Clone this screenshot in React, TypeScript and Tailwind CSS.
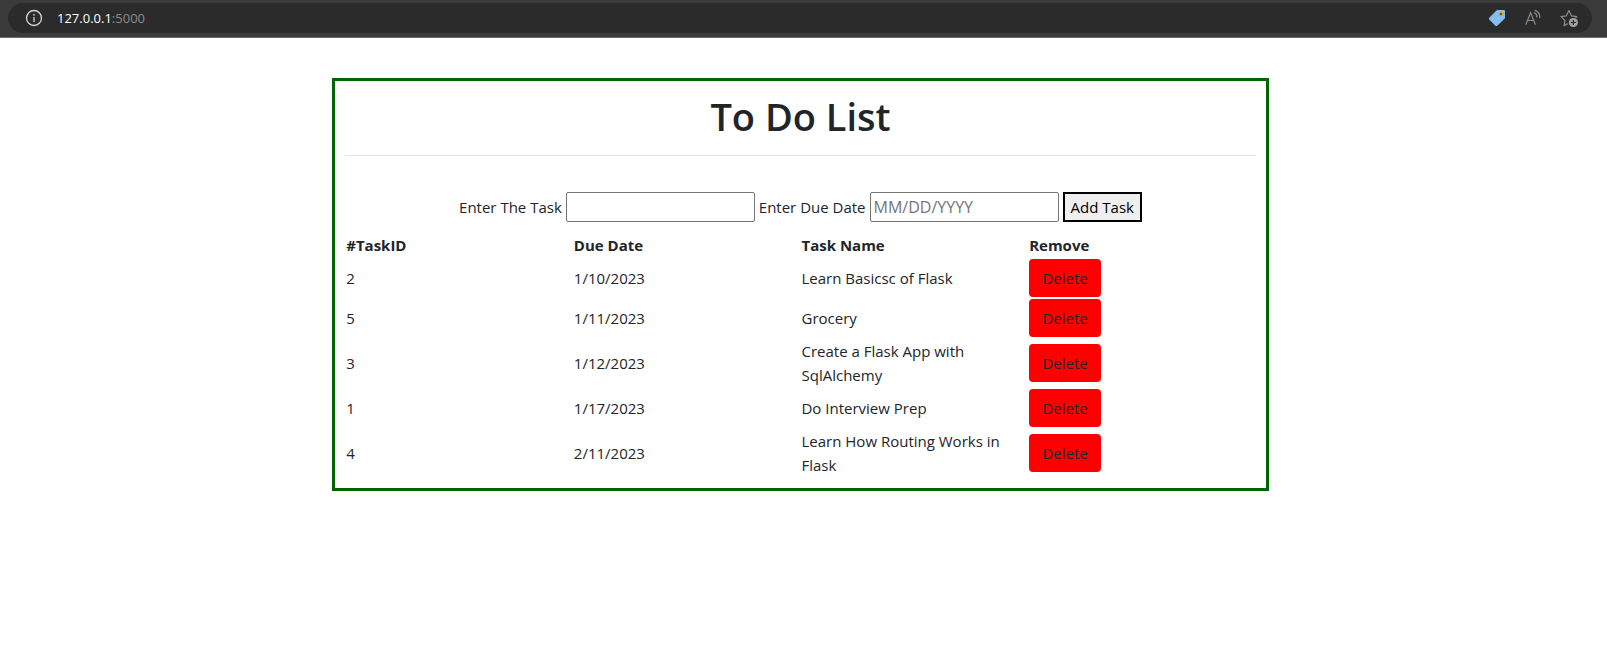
import React from "react";

type Task = { id: number; due: string; name: string };

const tasks: Task[] = [
  { id: 2, due: "1/10/2023", name: "Learn Basicsc of Flask" },
  { id: 5, due: "1/11/2023", name: "Grocery" },
  { id: 3, due: "1/12/2023", name: "Create a Flask App with SqlAlchemy" },
  { id: 1, due: "1/17/2023", name: "Do Interview Prep" },
  { id: 4, due: "2/11/2023", name: "Learn How Routing Works in Flask" },
];

const columns = ["#TaskID", "Due Date", "Task Name", "Remove"];

function InfoIcon() {
  return (
    <svg width="18" height="18" viewBox="0 0 18 18" fill="none" aria-hidden="true">
      <circle cx="9" cy="9" r="7.5" stroke="#d6d6d6" strokeWidth="1.3" />
      <path d="M9 8v5" stroke="#b5b5b5" strokeWidth="1.6" />
      <circle cx="9" cy="5.7" r="1" fill="#b5b5b5" />
    </svg>
  );
}

function TagIcon() {
  return (
    <svg width="18" height="18" viewBox="0 0 18 18" aria-hidden="true">
      <path
        d="M9.8 1H15.8Q17 1 17 2.2V8.6Q17 9.3 16.5 9.8L9.3 16.7Q8.3 17.5 7.4 16.7L1.2 10.6Q0.4 9.7 1.2 8.8L8.4 1.6Q9 1 9.8 1Z"
        fill="#84bdee"
      />
      <circle cx="13" cy="5" r="1.6" fill="#4a3c18" stroke="#d9a514" strokeWidth="1.3" />
    </svg>
  );
}

function ReadAloudIcon() {
  return (
    <svg width="18" height="18" viewBox="0 0 18 18" fill="none" stroke="#8b8b8b" strokeWidth="1.2" strokeLinecap="round" aria-hidden="true">
      <path d="M2 15.3L6.6 3.6L11.2 15.3M3.5 11.5H9.7" />
      <path d="M10.3 3.8Q12.9 5 12.9 8" />
      <path d="M11.2 1.4Q16 3.4 15.8 8.6" />
    </svg>
  );
}

function AddFavoriteIcon() {
  return (
    <svg width="18" height="18" viewBox="0 0 18 18" fill="none" aria-hidden="true">
      <path
        d="M7.3 14.9L4.1 16.6L4.9 11.5L1 7.6L6.3 6.8L8.9 1.6L11.4 6.8L16.8 7.6L15.9 8.5"
        stroke="#8b8b8b"
        strokeWidth="1.2"
        strokeLinejoin="round"
        strokeLinecap="round"
      />
      <circle cx="13.4" cy="13.5" r="4.6" fill="#a0a0a0" />
      <path d="M13.4 10.9v5.2M10.8 13.5h5.2" stroke="#2b2b2b" strokeWidth="1.2" />
    </svg>
  );
}

function AddressBar() {
  return (
    <header className="border-b border-[#6b6b6b] bg-[#3b3b3b] pt-[3px] pr-[15px] pb-1 pl-2">
      <div className="flex h-[30px] items-center rounded-full bg-[#2b2b2b] pr-[14px] pl-[17px]">
        <button type="button" aria-label="View site information">
          <InfoIcon />
        </button>
        <p className="ml-[14px] flex-1 text-[13px] leading-5 text-[#8b8b8b]">
          <span className="text-white">127.0.0.1</span>:5000
        </p>
        <div className="flex gap-[18px]">
          <button type="button" aria-label="Shopping">
            <TagIcon />
          </button>
          <button type="button" aria-label="Read aloud">
            <ReadAloudIcon />
          </button>
          <button type="button" aria-label="Add to favorites">
            <AddFavoriteIcon />
          </button>
        </div>
      </div>
    </header>
  );
}

export default function App() {
  return (
    <div className="min-h-screen bg-white font-['Open_Sans','Noto_Sans',sans-serif] text-[15px] leading-6 text-[#212529]">
      <AddressBar />
      <main className="pt-10 pr-1.5">
        <section className="mx-auto w-[58.5%] border-3 border-[#006400] p-2.5">
          <h1 className="pt-0.5 text-center text-[38px] leading-[46px] font-semibold">To Do List</h1>
          <hr className="my-4 border-t border-[#e5e5e5]" />
          <form className="mt-9 flex flex-wrap items-center justify-center gap-1 pb-2.5" onSubmit={(e) => e.preventDefault()}>
            <label htmlFor="task">Enter The Task</label>
            <input id="task" type="text" className="h-[30px] w-[189px] rounded-xs border border-[#767676] px-[3px]" />
            <label htmlFor="due">Enter Due Date</label>
            <input
              id="due"
              type="text"
              placeholder="MM/DD/YYYY"
              className="h-[30px] w-[189px] rounded-xs border border-[#767676] px-[3px] text-base placeholder:text-[#757575]"
            />
            <button type="submit" className="h-[30px] border-2 border-black bg-[#efefef] px-1.5 leading-6 text-black">
              Add Task
            </button>
          </form>
          <table className="w-full table-fixed">
            <thead>
              <tr>
                {columns.map((c) => (
                  <th key={c} scope="col" className="p-px text-left font-bold">
                    {c}
                  </th>
                ))}
              </tr>
            </thead>
            <tbody>
              {tasks.map((t) => (
                <tr key={t.id}>
                  <td className="p-px">{t.id}</td>
                  <td className="p-px">{t.due}</td>
                  <td className="p-px">{t.name}</td>
                  <td className="p-px">
                    <button type="button" className="block h-[38px] w-[72px] rounded bg-[#ff0000] text-center">
                      Delete
                    </button>
                  </td>
                </tr>
              ))}
            </tbody>
          </table>
        </section>
      </main>
    </div>
  );
}
